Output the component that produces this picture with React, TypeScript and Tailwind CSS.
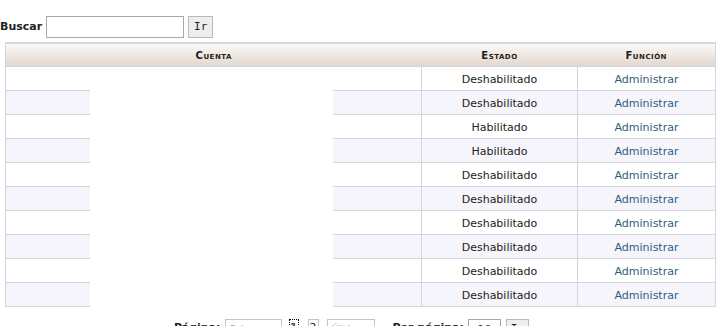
const rows = [
  "Deshabilitado",
  "Deshabilitado",
  "Habilitado",
  "Habilitado",
  "Deshabilitado",
  "Deshabilitado",
  "Deshabilitado",
  "Deshabilitado",
  "Deshabilitado",
  "Deshabilitado",
];

export default function App() {
  return (
    <div className="relative w-[720px] h-[326px] overflow-hidden bg-white text-[11px] text-[#222] font-['DejaVu_Sans',Verdana,sans-serif]">
      <div className="pt-[16px] flex items-center h-[38px]">
        <span className="font-bold">Buscar</span>
        <input className="ml-[4px] w-[138px] h-[22px] border border-[#a8a8a8] bg-white" />
        <button className="ml-[4px] w-[25px] h-[22px] border border-[#b8b8b8] bg-[#eeeeee] text-[11px] font-['DejaVu_Sans_Mono',monospace]">
          Ir
        </button>
      </div>

      <table className="ml-[5px] mt-[4px] w-[711px] border-collapse">
        <thead>
          <tr className="h-[24px] bg-gradient-to-b from-[#fbf9f7] to-[#e2d7ce] border border-[#d8d8d8]">
            <th className="w-[416px] pt-[2px] text-[10px] font-bold [font-variant:small-caps] tracking-[0.5px]">Cuenta</th>
            <th className="w-[156px] pt-[2px] text-[10px] font-bold [font-variant:small-caps] tracking-[0.5px]">Estado</th>
            <th className="pt-[2px] text-[10px] font-bold [font-variant:small-caps] tracking-[0.5px]">Función</th>
          </tr>
        </thead>
        <tbody>
          {rows.map((estado, i) => (
            <tr key={i} className={`h-[24px] ${i % 2 === 1 ? "bg-[#f5f5fb]" : "bg-white"}`}>
              <td className="border border-[#d4d4dc]"></td>
              <td className="border border-[#d4d4dc] pt-[3px] text-center">{estado}</td>
              <td className="border border-[#d4d4dc] pt-[3px] text-center text-[#2f5d78]">Administrar</td>
            </tr>
          ))}
        </tbody>
      </table>

      <div className="absolute left-[90px] top-[67px] w-[243px] h-[241px] bg-white" />

      <div className="mt-[12px] flex items-start h-[20px] text-[11px]">
        <span className="ml-[174px] pt-[1px] font-bold">Página:</span>
        <input className="ml-[4px] w-[57px] h-[20px] border border-[#c4c4c4] px-[4px] text-[#aaa]" defaultValue="Primera" />
        <span className="ml-[7px] w-[10px] h-[18px] border border-dotted border-black text-center font-bold text-[#2f5d78]">1</span>
        <span className="ml-[9px] w-[11px] h-[16px] border border-[#c4c4c4] text-center">2</span>
        <input className="ml-[8px] w-[48px] h-[20px] border border-[#c4c4c4] px-[4px] text-[#aaa]" defaultValue="Última" />
        <span className="ml-[18px] pt-[1px] font-bold">Por página:</span>
        <input className="ml-[4px] w-[33px] h-[20px] border border-[#a8a8a8] text-center" defaultValue="10" />
        <button className="ml-[5px] w-[23px] h-[20px] border border-[#b8b8b8] bg-[#eeeeee] font-['DejaVu_Sans_Mono',monospace]">Ir</button>
      </div>
    </div>
  );
}
